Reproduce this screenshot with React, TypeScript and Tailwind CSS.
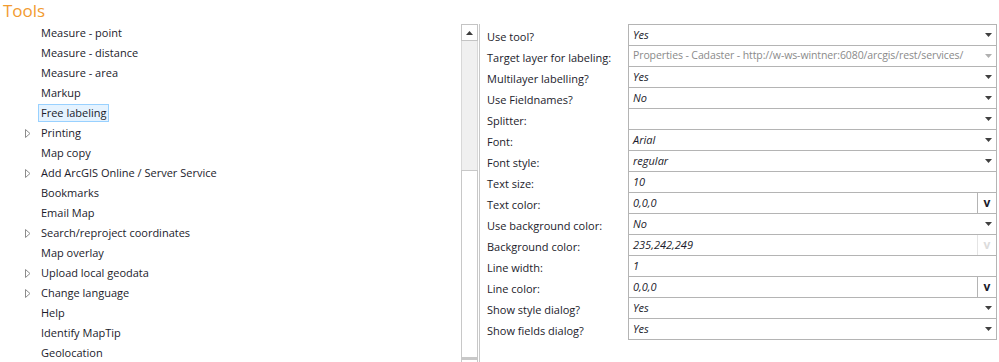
import React from 'react';

type TreeItem = { label: string; expandable?: boolean; selected?: boolean };

const treeItems: TreeItem[] = [
  { label: 'Measure - point' },
  { label: 'Measure - distance' },
  { label: 'Measure - area' },
  { label: 'Markup' },
  { label: 'Free labeling', selected: true },
  { label: 'Printing', expandable: true },
  { label: 'Map copy' },
  { label: 'Add ArcGIS Online / Server Service', expandable: true },
  { label: 'Bookmarks' },
  { label: 'Email Map' },
  { label: 'Search/reproject coordinates', expandable: true },
  { label: 'Map overlay' },
  { label: 'Upload local geodata', expandable: true },
  { label: 'Change language', expandable: true },
  { label: 'Help' },
  { label: 'Identify MapTip' },
  { label: 'Geolocation' },
];

type Kind = 'select' | 'text' | 'color';
type Prop = { label: string; value: string; kind: Kind; disabled?: boolean; plain?: boolean };

const props: Prop[] = [
  { label: 'Use tool?', value: 'Yes', kind: 'select' },
  {
    label: 'Target layer for labeling:',
    value: 'Properties - Cadaster - http://w-ws-wintner:6080/arcgis/rest/services/',
    kind: 'select',
    disabled: true,
    plain: true,
  },
  { label: 'Multilayer labelling?', value: 'Yes', kind: 'select' },
  { label: 'Use Fieldnames?', value: 'No', kind: 'select' },
  { label: 'Splitter:', value: '', kind: 'select' },
  { label: 'Font:', value: 'Arial', kind: 'select' },
  { label: 'Font style:', value: 'regular', kind: 'select' },
  { label: 'Text size:', value: '10', kind: 'text' },
  { label: 'Text color:', value: '0,0,0', kind: 'color' },
  { label: 'Use background color:', value: 'No', kind: 'select' },
  { label: 'Background color:', value: '235,242,249', kind: 'color', disabled: true },
  { label: 'Line width:', value: '1', kind: 'text' },
  { label: 'Line color:', value: '0,0,0', kind: 'color' },
  { label: 'Show style dialog?', value: 'Yes', kind: 'select' },
  { label: 'Show fields dialog?', value: 'Yes', kind: 'select' },
];

const Expander = () => (
  <svg width="6" height="9" viewBox="0 0 6 9" className="block">
    <path d="M0.5 0.5 L5 4.5 L0.5 8.5 Z" fill="none" stroke="#8c8c8c" strokeWidth="1" />
  </svg>
);

const DropArrow = ({ disabled }: { disabled?: boolean }) => (
  <svg width="7" height="4" viewBox="0 0 7 4" className="block">
    <path d="M0 0 H7 L3.5 4 Z" fill={disabled ? '#b0b0b0' : '#404040'} />
  </svg>
);

const App = () => {
  return (
    <div
      className="w-[999px] h-[362px] bg-white overflow-hidden text-[#1b1b2b]"
      style={{ fontFamily: '"Open Sans", "Noto Sans", sans-serif' }}
    >
      <div className="h-[23px] pl-[3px] text-[17px] leading-[22px] text-[#f29b30]">Tools</div>

      <div className="flex">
        {/* tree */}
        <div className="w-[461px] flex flex-col text-[11px]">
          {treeItems.map((item) => (
            <div key={item.label} className="h-[20px] flex items-center">
              <div className="w-[38px] flex justify-end pr-[7px]">{item.expandable && <Expander />}</div>
              <div
                className={
                  item.selected
                    ? 'h-[18px] flex items-center px-[2px] border border-[#99d1ff] bg-[#e5f3ff]'
                    : 'h-[18px] flex items-center px-[3px]'
                }
              >
                <span className="whitespace-nowrap">{item.label}</span>
              </div>
            </div>
          ))}
        </div>

        {/* scrollbar */}
        <div className="mt-[1px] w-[17px] flex flex-col">
          <div className="h-[17px] border border-[#c4c4c4] bg-white flex items-center justify-center">
            <svg width="7" height="4" viewBox="0 0 7 4" className="block">
              <path d="M0 4 H7 L3.5 0 Z" fill="#3c3c3c" />
            </svg>
          </div>
          <div className="h-[129px] bg-[#f0f0f0] border-x border-[#d8d8d8]" />
          <div className="h-[188px] border border-[#c8c8c8] bg-white" />
          <div className="flex-1 border-x border-t-2 border-[#c8c8c8] bg-white" />
        </div>

        {/* divider */}
        <div className="ml-[1px] mt-[1px] w-px h-[400px] bg-[#c8c8c8]" />

        {/* property grid */}
        <div className="mt-[1px] flex flex-col">
          {props.map((p, i) => (
            <div key={p.label} className="flex h-[21px]">
              <div className="w-[148px] pl-[7px] pt-[6px] flex items-center text-[11px] whitespace-nowrap">
                {p.label}
              </div>
              <div
                className={
                  'w-[369px] flex border-x border-t border-[#b4b4b4] ' +
                  (i === props.length - 1 ? 'h-[22px] border-b' : 'h-[21px]')
                }
              >
                <div
                  className={
                    'flex-1 min-w-0 pl-[4px] flex items-center whitespace-nowrap overflow-hidden ' +
                    (p.plain ? 'text-[10.5px] tracking-[-0.1px] text-[#8a8a8a]' : 'text-[11px] italic text-[#1b1b2b]')
                  }
                >
                  {p.value}
                </div>
                {p.kind === 'select' && (
                  <div className="w-[16px] flex items-center justify-center">
                    <DropArrow disabled={p.disabled} />
                  </div>
                )}
                {p.kind === 'color' && (
                  <div
                    className={
                      'w-[19px] flex items-center justify-center border-l text-[12px] font-bold ' +
                      (p.disabled ? 'border-[#e4e4e4] text-[#dcdcdc]' : 'border-[#b4b4b4] text-[#1b1b2b]')
                    }
                  >
                    v
                  </div>
                )}
              </div>
            </div>
          ))}
        </div>
      </div>
    </div>
  );
};

export default App;
